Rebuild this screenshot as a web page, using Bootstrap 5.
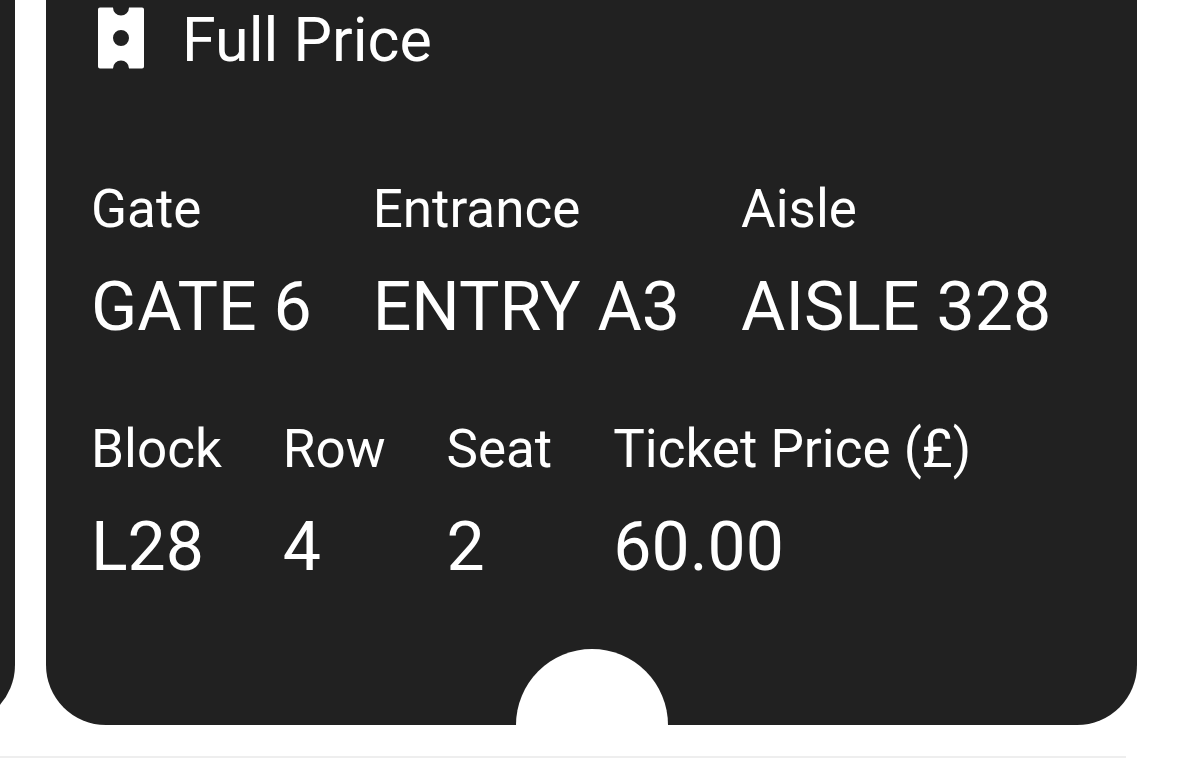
<!DOCTYPE html>
<html lang="en">
<head>
<meta charset="utf-8">
<meta name="viewport" content="width=device-width, initial-scale=1">
<title>Ticket</title>
<link href="https://cdn.jsdelivr.net/npm/bootstrap@5.3.0/dist/css/bootstrap.min.css" rel="stylesheet">
<style>
  body { font-family: Roboto, "Liberation Sans", sans-serif; background: #fff; }
  .ticket-strip { gap: 31px; padding-right: 63px; }
  .ticket { background: #212121; color: #fff; border-radius: 0 0 60px 60px; }
  .peek { flex: 0 0 15px; }
  .ticket-previous { flex: 0 0 240px; }
  .ticket-current { padding: 0 45px 138px; }
  .ticket-current::after {
    content: ""; position: absolute; left: 50%; bottom: 0;
    width: 152px; height: 76px; margin-left: -76px;
    background: #fff; border-radius: 76px 76px 0 0;
  }
  .ticket-type { gap: 38px; padding-left: 7px; margin-bottom: 97px; }
  .ticket-type h1 { font-size: 61px; line-height: 80px; font-weight: 400; }
  .facts { gap: 61px; }
  .facts + .facts { margin-top: 70px; }
  .facts dt { font-size: 53px; line-height: 64px; font-weight: 400; margin-bottom: 26px; }
  .facts dd { font-size: 68px; line-height: 80px; }
  .sheet-edge { height: 2px; margin-top: 31px; margin-right: 74px; background: #eee; }
</style>
</head>
<body>
<main>
  <div class="ticket-strip d-flex">
    <div class="peek d-flex justify-content-end overflow-hidden" aria-hidden="true">
      <div class="ticket ticket-previous"></div>
    </div>
    <article class="ticket ticket-current position-relative flex-grow-1">
      <header class="ticket-type d-flex align-items-center">
        <svg class="mb-1 flex-shrink-0" width="46" height="62" viewBox="0 0 46 62" fill="#fff" aria-hidden="true">
          <path fill-rule="evenodd" d="M2 0.5H15A8 8 0 0 0 31 0.5H44A2 2 0 0 1 46 2.5V59.5A2 2 0 0 1 44 61.500H31A8 8 0 0 0 15 61.500H2A2 2 0 0 1 0 59.500V2.500A2 2 0 0 1 2 0.500ZM23 23A8 8 0 1 0 23 39A8 8 0 1 0 23 23Z"/>
        </svg>
        <h1 class="m-0 text-nowrap">Full Price</h1>
      </header>
      <dl class="facts d-flex mb-0 text-nowrap">
        <div><dt>Gate</dt><dd class="m-0">GATE 6</dd></div>
        <div><dt>Entrance</dt><dd class="m-0">ENTRY A3</dd></div>
        <div><dt>Aisle</dt><dd class="m-0">AISLE 328</dd></div>
      </dl>
      <dl class="facts d-flex mb-0 text-nowrap">
        <div><dt>Block</dt><dd class="m-0">L28</dd></div>
        <div><dt>Row</dt><dd class="m-0">4</dd></div>
        <div><dt>Seat</dt><dd class="m-0">2</dd></div>
        <div><dt>Ticket Price (£)</dt><dd class="m-0">60.00</dd></div>
      </dl>
    </article>
  </div>
  <div class="sheet-edge"></div>
</main>
<script src="https://cdn.jsdelivr.net/npm/bootstrap@5.3.0/dist/js/bootstrap.bundle.min.js"></script>
</body>
</html>
